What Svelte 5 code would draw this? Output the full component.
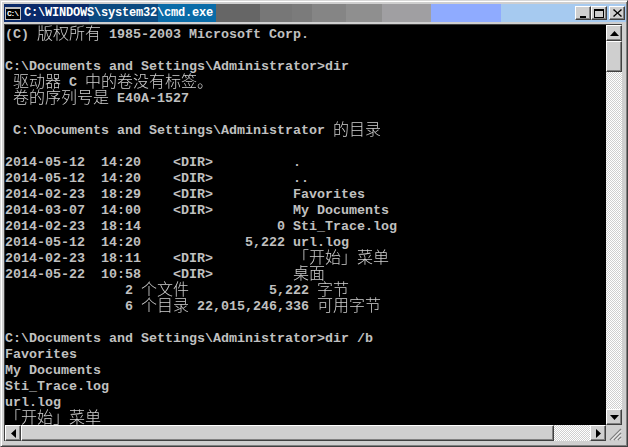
<script>
  const lines = [
    ['(C) ', ['版权所有'], ' 1985-2003 Microsoft Corp.'],
    [''],
    ['C:\\Documents and Settings\\Administrator>dir'],
    [' ', ['驱动器'], ' C ', ['中的卷没有标签。']],
    [' ', ['卷的序列号是'], ' E40A-1527'],
    [''],
    [' C:\\Documents and Settings\\Administrator ', ['的目录']],
    [''],
    ['2014-05-12  14:20    <DIR>          .'],
    ['2014-05-12  14:20    <DIR>          ..'],
    ['2014-02-23  18:29    <DIR>          Favorites'],
    ['2014-03-07  14:00    <DIR>          My Documents'],
    ['2014-02-23  18:14                 0 Sti_Trace.log'],
    ['2014-05-12  14:20             5,222 url.log'],
    ['2014-02-23  18:11    <DIR>          ', ['「开始」菜单']],
    ['2014-05-22  10:58    <DIR>          ', ['桌面']],
    ['               2 ', ['个文件'], '          5,222 ', ['字节']],
    ['               6 ', ['个目录'], ' 22,015,246,336 ', ['可用字节']],
    [''],
    ['C:\\Documents and Settings\\Administrator>dir /b'],
    ['Favorites'],
    ['My Documents'],
    ['Sti_Trace.log'],
    ['url.log'],
    [['「开始」菜单']]
  ];
</script>

<div class="window">
  <div class="titlebar">
    <div class="segments">
      <i class="s1"></i><i class="s2"></i><i class="s3"></i><i class="s4"></i><i class="s5"></i><i class="s6"></i><i class="s7"></i><i class="s8"></i><i class="s9"></i><i class="s10"></i><i class="s11"></i>
    </div>
    <span class="appicon">C:\</span>
    <span class="title">C:\WINDOWS\system32\cmd.exe</span>
    <div class="buttons">
      <button class="btn" aria-label="Minimize"><svg width="9" height="9" viewBox="0 0 9 9"><rect x="1" y="7" width="6" height="2" fill="#000"/></svg></button>
      <button class="btn" aria-label="Maximize"><svg width="10" height="9" viewBox="0 0 10 9"><path d="M0 0h10v9H0z M1 2v6h8V2z" fill="#000" fill-rule="evenodd"/></svg></button>
      <button class="btn close" aria-label="Close"><svg width="9" height="8" viewBox="0 0 9 8"><path d="M1 0 4.500 3.200 8 0 9 1 5.500 4 9 7 8 8 4.500 4.800 1 8 0 7 3.500 4 0 1z" fill="#000"/></svg></button>
    </div>
  </div>
  <div class="client">
    <pre class="console">{#each lines as line}<div class="line">{#each line as part}{#if typeof part === 'string'}{part}{:else}<span class="cjk">{part[0]}</span>{/if}{/each}</div>{/each}</pre>
    <div class="vscroll">
      <button class="btn sb" aria-label="Up"><svg width="9" height="5" viewBox="0 0 9 5"><path d="M4.500 0 9 5H0z" fill="#000"/></svg></button>
      <div class="thumb vthumb"></div>
      <div class="track"></div>
      <button class="btn sb" aria-label="Down"><svg width="9" height="5" viewBox="0 0 9 5"><path d="M0 0h9L4.500 5z" fill="#000"/></svg></button>
    </div>
    <div class="hscroll">
      <button class="btn sb" aria-label="Left"><svg width="5" height="9" viewBox="0 0 5 9"><path d="M5 0v9L0 4.500z" fill="#000"/></svg></button>
      <div class="thumb hthumb"></div>
      <div class="track"></div>
      <button class="btn sb" aria-label="Right"><svg width="5" height="9" viewBox="0 0 5 9"><path d="M0 0v9l5-4.500z" fill="#000"/></svg></button>
    </div>
    <div class="grip">
      <svg width="16" height="16" viewBox="0 0 16 16"><path d="M15 4 4 15M15 8 8 15M15 12 12 15" stroke="#808080" stroke-width="1.400" fill="none"/><path d="M15 5.500 5.500 15M15 9.500 9.500 15M15 13.500 13.500 15" stroke="#fff" stroke-width="1" fill="none"/></svg>
    </div>
  </div>
</div>

<style>
  :global(body) { margin: 0; background: #ccc; }
  .window {
    width: 628px;
    height: 447px;
    box-sizing: border-box;
    background: #cfcfcf;
    border: 1px solid;
    border-color: #d8d8d8 #404040 #404040 #d8d8d8;
    box-shadow: inset 1px 1px 0 #fff, inset -1px -1px 0 #808080;
    padding: 3px 5px 5px 3px;
    display: flex;
    flex-direction: column;
    overflow: hidden;
  }
  .titlebar {
    position: relative;
    height: 18px;
    width: 622px;
    display: flex;
    align-items: center;
    flex: none;
    margin-bottom: 2px;
  }
  .segments { position: absolute; inset: 0; display: flex; }
  .segments i { display: block; height: 100%; }
  .s1 { width: 85px; background: #0a2a6a; }
  .s2 { width: 69px; background: #0b4a80; }
  .s3 { width: 58px; background: #0a6ca8; }
  .s4 { width: 44px; background: #666666; }
  .s5 { width: 32px; background: #777777; }
  .s6 { width: 20px; background: #7b7b7b; }
  .s7 { width: 34px; background: #858585; }
  .s8 { width: 36px; background: #8f8f8f; }
  .s9 { width: 49px; background: #a09fa2; }
  .s10 { width: 70px; background: #8fabff; }
  .s11 { flex: 1; background: #a6caf0; }
  .appicon {
    position: relative;
    width: 16px;
    height: 13px;
    margin-left: 1px;
    background: #000;
    border: 1px solid #c0c0c0;
    border-top-width: 2px;
    box-sizing: border-box;
    color: #fff;
    font: bold 8px/9px "Liberation Mono", monospace;
    letter-spacing: -1.2px;
    padding-left: 1px;
    overflow: hidden;
  }
  .title {
    position: relative;
    margin-left: 3px;
    color: #fff;
    font: bold 12px/18px "Liberation Mono", monospace;
    letter-spacing: -0.2px;
    white-space: pre;
  }
  .buttons {
    position: relative;
    margin-left: auto;
    margin-right: 1px;
    display: flex;
  }
  .close { margin-left: 2px; }
  .btn {
    appearance: none;
    width: 16px;
    height: 14px;
    padding: 0;
    box-sizing: border-box;
    background: #cfcfcf;
    border: 1px solid;
    border-color: #fff #404040 #404040 #fff;
    box-shadow: inset -1px -1px 0 #808080;
    display: flex;
    align-items: center;
    justify-content: center;
  }
  .client {
    flex: 1;
    min-height: 0;
    display: grid;
    grid-template-columns: 1fr 16px;
    grid-template-rows: 1fr 16px;
    border-top: 1px solid #404040;
    border-left: 1px solid #404040;
  }
  .console {
    margin: 0;
    padding: 0;
    background: #000;
    color: #c0c0c0;
    font: bold 13.33px/16px "Liberation Mono", monospace;
    overflow: hidden;
    white-space: pre;
  }
  .line { height: 16px; line-height: 20px; }
  .cjk {
    font: 300 16px/16px "Noto Sans CJK SC", sans-serif;
    display: inline-block;
    height: 16px;
    margin-top: -1px;
    vertical-align: top;
    color: #cfcfcf;
    will-change: transform;
  }
  .vscroll { display: flex; flex-direction: column; min-height: 0; }
  .hscroll { display: flex; min-width: 0; }
  .sb { width: 16px; height: 16px; flex: none; }
  .thumb {
    background: #cfcfcf;
    border: 1px solid;
    border-color: #fff #404040 #404040 #fff;
    box-sizing: border-box;
    box-shadow: inset -1px -1px 0 #808080;
    flex: none;
  }
  .vthumb { height: 31px; }
  .hthumb { width: 533px; }
  .track {
    flex: 1;
    background: repeating-conic-gradient(#fff 0 25%, #cfcfcf 0 50%) 0 0 / 2px 2px;
  }
  .grip { background: #cfcfcf; line-height: 0; }
</style>
